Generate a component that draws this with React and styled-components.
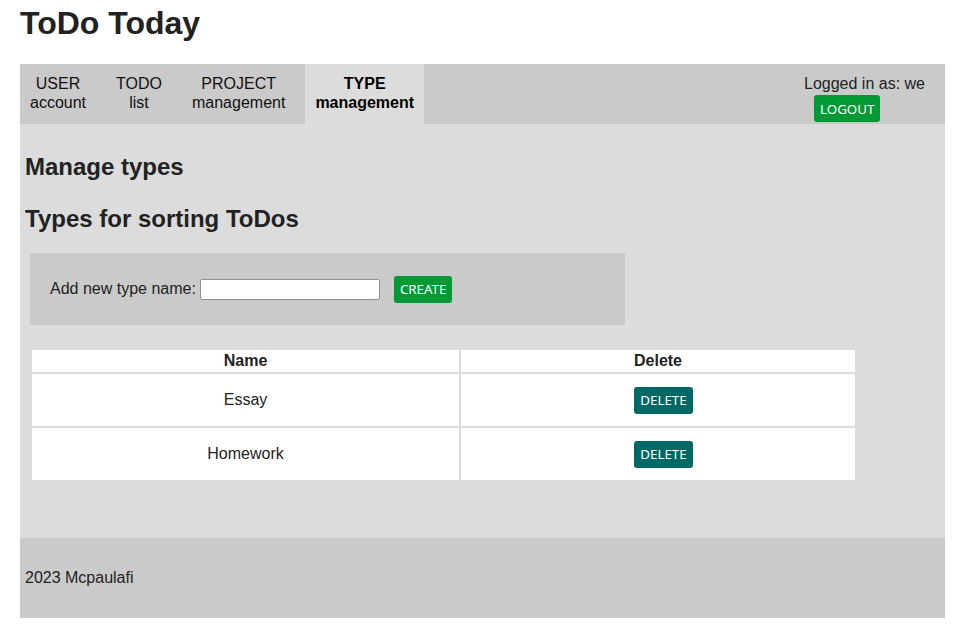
import React from "react";
import styled, { createGlobalStyle } from "styled-components";

const GlobalStyle = createGlobalStyle`
  body {
    margin: 0;
    background: #ffffff;
    color: #222222;
    font-family: "Liberation Sans", Arial, sans-serif;
    font-size: 16px;
  }
`;

const types = ["Essay", "Homework"];

const navItems = [
  { top: "USER", bottom: "account" },
  { top: "TODO", bottom: "list" },
  { top: "PROJECT", bottom: "management" },
  { top: "TYPE", bottom: "management", active: true },
];

const App = () => {
  return (
    <Page>
      <GlobalStyle />
      <Title>ToDo Today</Title>

      <Nav>
        <NavList>
          {navItems.map((item) => (
            <NavItem key={item.top} $active={item.active}>
              {item.top}
              <br />
              {item.bottom}
            </NavItem>
          ))}
        </NavList>
        <UserBox>
          <span>Logged in as: we</span>
          <LogoutButton>LOGOUT</LogoutButton>
        </UserBox>
      </Nav>

      <Main>
        <Heading>Manage types</Heading>
        <Heading>Types for sorting ToDos</Heading>

        <FormBox>
          <Label htmlFor="typeName">Add new type name:</Label>
          <TextInput id="typeName" type="text" />
          <ActionButton $color="#009933">CREATE</ActionButton>
        </FormBox>

        <Table>
          <thead>
            <tr>
              <HeadCell $width="427px">Name</HeadCell>
              <HeadCell $width="394px">Delete</HeadCell>
            </tr>
          </thead>
          <tbody>
            {types.map((t) => (
              <tr key={t}>
                <Cell>{t}</Cell>
                <Cell>
                  <ActionButton $color="#006966">DELETE</ActionButton>
                </Cell>
              </tr>
            ))}
          </tbody>
        </Table>
      </Main>

      <Footer>2023 Mcpaulafi</Footer>
    </Page>
  );
};

const Page = styled.div`
  padding: 0 12px 22px 20px;
`;

const Title = styled.h1`
  margin: 5px 0 22px;
  font-size: 32px;
  line-height: 37px;
  font-weight: bold;
`;

const Nav = styled.nav`
  display: flex;
  justify-content: space-between;
  height: 60px;
  background: #cacaca;
`;

const NavList = styled.div`
  display: flex;
  gap: 10px;
`;

const NavItem = styled.div`
  padding: 10px 10px 0;
  text-align: center;
  line-height: 19px;
  font-weight: ${(p) => (p.$active ? "bold" : "normal")};
  background: ${(p) => (p.$active ? "#dcdcdc" : "transparent")};
  color: ${(p) => (p.$active ? "#000000" : "#111111")};
`;

const UserBox = styled.div`
  display: flex;
  flex-direction: column;
  align-items: flex-start;
  padding: 10px 20px 0 0;
  line-height: 19px;
`;

// buttons carry a left margin, as on the original page
const Button = styled.button`
  border: none;
  border-radius: 3px;
  color: #ffffff;
  font-family: "Noto Sans", "Open Sans", sans-serif;
  font-size: 13.33px;
  height: 27px;
  margin-left: 11px;
  padding: 0 6px;
  cursor: pointer;
`;

const LogoutButton = styled(Button)`
  margin-top: 2px;
  margin-left: 10px;
  background: #009933;
`;

const ActionButton = styled(Button)`
  background: ${(p) => p.$color};
`;

const Main = styled.main`
  background: #dcdcdc;
  padding: 5px 5px 56px;
  display: flow-root;
`;

const Heading = styled.h2`
  margin: 24px 0 0;
  font-size: 24px;
  line-height: 28px;
  font-weight: bold;
`;

const FormBox = styled.div`
  display: flex;
  align-items: center;
  width: 595px;
  height: 72px;
  box-sizing: border-box;
  margin: 20px 0 0 5px;
  padding-left: 20px;
  background: #cacaca;
`;

const Label = styled.label`
  margin-right: 4px;
`;

const TextInput = styled.input`
  width: 180px;
  height: 21px;
  box-sizing: border-box;
  border: 1px solid #8f8f9d;
  border-radius: 2px;
  background: #ffffff;
  margin-right: 3px;
  padding: 1px 2px;
`;

const Table = styled.table`
  margin: 23px 0 0 5px;
  border-spacing: 2px;
`;

const HeadCell = styled.th`
  width: ${(p) => p.$width};
  height: 22px;
  padding: 0;
  background: #ffffff;
  font-weight: bold;
  text-align: center;
`;

const Cell = styled.td`
  height: 52px;
  padding: 0;
  background: #ffffff;
  text-align: center;
`;

const Footer = styled.footer`
  display: flex;
  align-items: center;
  height: 80px;
  padding-left: 5px;
  background: #cacaca;
`;

export default App;
